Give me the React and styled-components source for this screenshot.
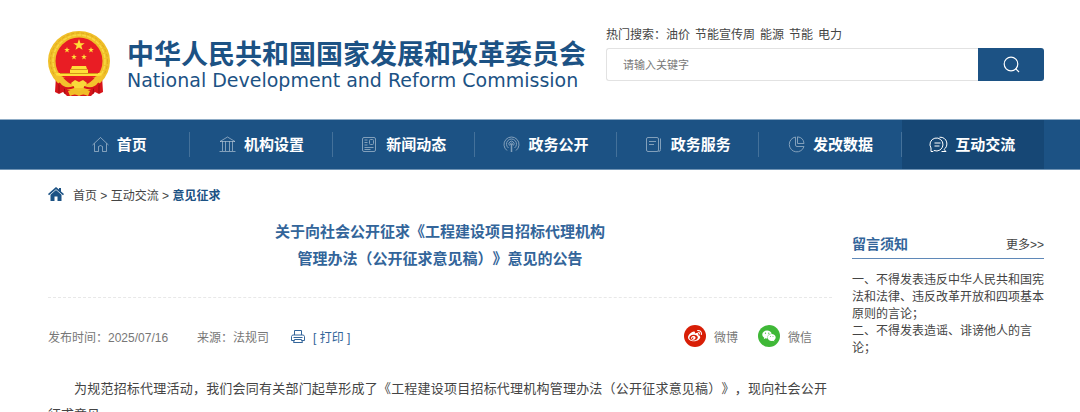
import React from 'react'
import styled, { createGlobalStyle } from 'styled-components'
import { FaWeibo, FaWeixin } from 'react-icons/fa'

const GlobalStyle = createGlobalStyle`
  * {
    box-sizing: border-box;
  }

  body {
    margin: 0;
    background: #fff;
    color: #444;
    font-family: 'Liberation Sans', 'Noto Sans CJK SC', sans-serif;
    font-size: 12px;
    text-spacing-trim: space-all;
    overflow-x: hidden;
  }

  a {
    color: inherit;
    text-decoration: none;
  }

  h1, h2, p {
    margin: 0;
  }
`

const Container = styled.div`
  padding: 0 36px 0 48px;
`

const Header = styled(Container)`
  display: flex;
  justify-content: space-between;
  align-items: flex-start;
  height: 119px;
`

const Brand = styled.a`
  display: flex;
  gap: 17px;
  padding-top: 30px;
  color: #1c5284;
`

const BrandText = styled.div`
  padding-top: 11px;
  white-space: nowrap;
`

const BrandName = styled.div`
  font-size: 27px;
  font-weight: 700;
  line-height: 28px;
`

const BrandEnglish = styled.div`
  font-family: 'DejaVu Sans', sans-serif;
  font-size: 19px;
  line-height: 22px;
`

const SearchArea = styled.div`
  width: 438px;
  padding-top: 26px;
`

const HotSearch = styled.div`
  display: flex;
  line-height: 18px;
  margin-bottom: 4px;
  white-space: nowrap;
`

const HotWords = styled.div`
  display: flex;
  gap: 5px;
`

const SearchForm = styled.form`
  display: flex;
  height: 33px;
`

const SearchInput = styled.input`
  flex: 1;
  min-width: 0;
  padding: 0 16px;
  border: 1px solid #e2e2e2;
  border-right: 0;
  border-radius: 3px 0 0 3px;
  font-family: inherit;
  font-size: 11px;
  color: #444;
  outline: none;

  &::placeholder {
    color: #777;
  }
`

const SearchButton = styled.button`
  display: flex;
  align-items: center;
  justify-content: center;
  width: 66px;
  padding: 0;
  border: 0;
  border-radius: 0 3px 3px 0;
  background: #1c5284;
  color: #fff;
  cursor: pointer;
`

const Nav = styled.nav`
  background: #1c5284;
  border-top: 1px solid #8facc6;
  border-bottom: 1px solid #6f93b4;
`

const NavList = styled(Container)`
  display: flex;
`

const NavItem = styled.a`
  flex: 1;
  display: flex;
  align-items: center;
  justify-content: center;
  gap: 8px;
  position: relative;
  height: 49px;
  color: #fff;
  font-size: 15px;
  font-weight: 700;
  line-height: 20px;
  background: ${({ $active }) => ($active ? '#164775' : 'transparent')};

  svg {
    opacity: ${({ $active }) => ($active ? 1 : 0.45)};
  }

  &:not(:last-child)::after {
    content: '';
    position: absolute;
    right: 0;
    top: 12px;
    height: 25px;
    border-right: 1px solid #44719a;
  }
`

const Breadcrumb = styled(Container)`
  display: flex;
  align-items: center;
  height: 48px;
`

const Crumbs = styled.div`
  margin-left: 9px;
`

const CurrentCrumb = styled.a`
  && {
    color: #1c5284;
  }
  font-weight: 700;
`

const Content = styled(Container)`
  display: grid;
  grid-template-columns: minmax(0, 1fr) 192px;
  column-gap: 20px;
`

const Title = styled.h1`
  padding-bottom: 25px;
  border-bottom: 1px dashed #e8e8e8;
  color: #33659a;
  font-size: 15px;
  line-height: 27px;
  text-align: center;
`

const Meta = styled.div`
  display: flex;
  align-items: center;
  height: 76px;
  margin-bottom: 2px;
  color: #777;
`

const Source = styled.span`
  margin-left: 29px;
`

const PrintButton = styled.button`
  display: flex;
  align-items: center;
  gap: 8px;
  margin-left: 22px;
  padding: 0;
  border: 0;
  background: none;
  color: #33659a;
  font: inherit;
  cursor: pointer;
`

const Share = styled.div`
  display: flex;
  gap: 20px;
  margin-left: auto;
  padding-right: 20px;
`

const ShareLink = styled.a`
  display: flex;
  align-items: center;
  gap: 8px;
`

const ShareIcon = styled.span`
  display: flex;
  align-items: center;
  justify-content: center;
  width: 22px;
  height: 22px;
  border-radius: 50%;
  background: ${({ $color }) => $color};
  color: #fff;
  font-size: 14px;
`

const Article = styled.p`
  color: #444;
  font-size: 13px;
  line-height: 26px;
  text-indent: 2em;
  text-align: justify;
  padding-right: 5px;
`

const Sidebar = styled.aside`
  padding-top: 15px;
`

const SidebarHead = styled.div`
  display: flex;
  justify-content: space-between;
  align-items: center;
  height: 26px;
  padding-bottom: 5px;
  border-bottom: 1px solid #5f88b8;
`

const SidebarTitle = styled.h2`
  color: #33659a;
  font-size: 14px;
  font-weight: 700;
`

const Rules = styled.div`
  padding-top: 13px;
  line-height: 17px;
`

const STAR = 'M0-1 .24-.31.95-.31.38.12.59.81 0 .4-.59.81-.38.12-.95-.31-.24-.31Z'

const Emblem = () => (
  <svg width="62" height="67" viewBox="0 0 62 67" aria-hidden="true">
    <path d="M8 46 7 62l4 2 4-2 4 4h24l4-4 4 2 4-2-1-16Z" fill="#d7141a" />
    <path d="M11 52v11M16 54l1 10M51 52v11M46 54l-1 10" stroke="#9f0d12" />
    <ellipse cx="31" cy="31" rx="31" ry="30" fill="#f0bf28" />
    <ellipse cx="31" cy="31" rx="28.500" ry="28" fill="none" stroke="#dfa91f" strokeDasharray="3 2" />
    <ellipse cx="31" cy="31" rx="26" ry="26" fill="none" stroke="#f8d943" strokeWidth="1.500" strokeDasharray="4 1" />
    <circle cx="31" cy="31" r="23.500" fill="#e91d24" />
    <g fill="#ffdf38">
      <path d={STAR} transform="translate(31 15) scale(6)" />
      <path d={STAR} transform="translate(19 20) scale(3)" />
      <path d={STAR} transform="translate(43 20) scale(3)" />
      <path d={STAR} transform="translate(26 27) scale(3)" />
      <path d={STAR} transform="translate(36 27) scale(3)" />
      <path d="M24 36h14l1 3H23ZM22 39h18v4h13l1 3H8l1-3h13Z" />
    </g>
    <path d="M22 39.500h18M12 43.500h38" stroke="#d59519" />
    <path d="M6 45c9 1 13 3 17 7 3 2 13 2 16 0 4-4 8-6 17-7-3 8-10 14-16 15-3 3-15 3-18 0C16 59 9 53 6 45Z" fill="#f3c22c" />
    <path d="M15 47.500c4 5 9 8 16 8s12-3 16-8l-7 1-4-1-5 3-5-3-4 1Z" fill="#e01b20" />
    <path d="m23 53 4-3 4 2 4-2 4 3-3 5h-10Z" fill="#f9d93a" />
    <path d="M11 53c4 6 10 6 15 4M51 53c-4 6-10 6-15 4" stroke="#d7141a" strokeWidth="2" fill="none" />
    <path d="M20 61q5-3 11 0 6-3 11 0l-2 5q-5-3-9 0-4-3-9 0Z" fill="#f0bd27" />
  </svg>
)

const SearchIcon = () => (
  <svg width="17" height="17" viewBox="0 0 17 17" fill="none" stroke="currentColor" strokeWidth="1.200" aria-hidden="true">
    <circle cx="8" cy="8" r="6.800" />
    <path d="m12.500 12.500 3.500 3.500" />
  </svg>
)

const CrumbHome = () => (
  <svg width="16" height="14" viewBox="0 0 16 14" fill="#1c5284" aria-hidden="true">
    <path d="M8 0 0 7l1 1.200 7-6 7 6L16 7l-3-2.600V1h-2v1.600Z" />
    <path d="M8 3 2.500 7.700V14h4V9.500h3V14h4V7.700Z" />
  </svg>
)

const PrintIcon = () => (
  <svg width="14" height="13" viewBox="0 0 14 13" fill="none" stroke="currentColor" aria-hidden="true">
    <path d="M3.500 5V.5h7V5M3.500 10.500H.5v-4l1-1.500h11l1 1.500v4h-3M2.500 7.500h9" />
    <path d="M3.500 9.500h7l1 3h-9Z" />
  </svg>
)

const navIcons = {
  home: <path d="M.5 9 8.500 1.500 16.500 9M2.500 7.500v8h4v-5q2-2 4 0v5h4v-8" />,
  bank: <path d="M1 5.500 8.500 1 16 5.500ZM3.500 5.500v9.500M6.500 5.500v9.500M10.500 5.500v9.500M13.500 5.500v9.500M.5 15.500h16" />,
  news: (
    <>
      <rect x="1.500" y="1.500" width="13" height="14" rx="1.500" />
      <path d="M3.500 4h3M3.500 6.500h3M3.500 9h3M3.500 11.500h9M3.500 13.500h6" />
      <rect x="8.500" y="3.500" width="4" height="5" rx="1" />
    </>
  ),
  signal: (
    <>
      <path d="M4 14.500a7.500 7.500 0 1 1 9 0M5.500 12a5 5 0 1 1 6 0M6.500 9.500a2.600 2.600 0 1 1 4 0" />
      <path d="M8.500 8v8" strokeWidth="1.500" />
      <circle cx="8.500" cy="8" r="1" />
    </>
  ),
  papers: (
    <>
      <rect x=".5" y="1.500" width="12" height="14" rx="1.500" />
      <path d="M3 5.500h7M3 8.500h5M14.500 2.500v11q0 2-2 2" />
    </>
  ),
  pie: (
    <>
      <path d="M7.500 1a7.500 7.500 0 1 0 8.500 9.500h-7q-1.500 0-1.500-1.500Z" />
      <path d="M9.500.8v6.700h6.500q-.5-6-6.500-6.700Z" />
    </>
  ),
  chat: (
    <>
      <path d="M1 15.500v-3.500A6.500 6.500 0 1 1 4 14.500l-1 1Z" />
      <path d="M4.500 7h6M4.500 10h5M9.500 1.200c8-.5 9.500 9 4.500 12.300l2 2h-4.500" />
    </>
  ),
}

const NavIcon = ({ name }) => (
  <svg width="17" height="17" viewBox="0 0 17 17" fill="none" stroke="currentColor" overflow="visible" aria-hidden="true">
    {navIcons[name]}
  </svg>
)

const navItems = [
  { label: '首页', icon: 'home' },
  { label: '机构设置', icon: 'bank' },
  { label: '新闻动态', icon: 'news' },
  { label: '政务公开', icon: 'signal' },
  { label: '政务服务', icon: 'papers' },
  { label: '发改数据', icon: 'pie' },
  { label: '互动交流', icon: 'chat', active: true },
]

const hotWords = ['油价', '节能宣传周', '能源', '节能', '电力']

const App = () => {
  const [keyword, setKeyword] = React.useState('')

  return (
    <>
      <GlobalStyle />
      <Header as="header">
        <Brand href="#">
          <Emblem />
          <BrandText>
            <BrandName>中华人民共和国国家发展和改革委员会</BrandName>
            <BrandEnglish>National Development and Reform Commission</BrandEnglish>
          </BrandText>
        </Brand>
        <SearchArea>
          <HotSearch>
            <span>热门搜索：</span>
            <HotWords>
              {hotWords.map(word => (
                <a href="#" key={word}>{word}</a>
              ))}
            </HotWords>
          </HotSearch>
          <SearchForm onSubmit={e => e.preventDefault()}>
            <SearchInput
              aria-label="请输入关键字"
              placeholder="请输入关键字"
              value={keyword}
              onChange={e => setKeyword(e.target.value)}
            />
            <SearchButton aria-label="搜索">
              <SearchIcon />
            </SearchButton>
          </SearchForm>
        </SearchArea>
      </Header>

      <Nav>
        <NavList>
          {navItems.map(item => (
            <NavItem href="#" key={item.label} $active={item.active}>
              <NavIcon name={item.icon} />
              {item.label}
            </NavItem>
          ))}
        </NavList>
      </Nav>

      <Breadcrumb>
        <CrumbHome />
        <Crumbs>
          <a href="#">首页</a> &gt; <a href="#">互动交流</a> &gt;{' '}
          <CurrentCrumb href="#">意见征求</CurrentCrumb>
        </Crumbs>
      </Breadcrumb>

      <Content>
        <main>
          <Title>
            关于向社会公开征求《工程建设项目招标代理机构
            <br />
            管理办法（公开征求意见稿）》意见的公告
          </Title>
          <Meta>
            <span>发布时间：2025/07/16</span>
            <Source>来源：法规司</Source>
            <PrintButton>
              <PrintIcon />
              [ 打印 ]
            </PrintButton>
            <Share>
              <ShareLink href="#">
                <ShareIcon $color="#d81e06"><FaWeibo /></ShareIcon>
                微博
              </ShareLink>
              <ShareLink href="#">
                <ShareIcon $color="#3fb837"><FaWeixin /></ShareIcon>
                微信
              </ShareLink>
            </Share>
          </Meta>
          <Article>
            为规范招标代理活动，我们会同有关部门起草形成了《工程建设项目招标代理机构管理办法（公开征求意见稿）》，现向社会公开征求意见。
          </Article>
        </main>

        <Sidebar>
          <SidebarHead>
            <SidebarTitle>留言须知</SidebarTitle>
            <a href="#">更多&gt;&gt;</a>
          </SidebarHead>
          <Rules>
            <p>一、不得发表违反中华人民共和国宪法和法律、违反改革开放和四项基本原则的言论；</p>
            <p>二、不得发表造谣、诽谤他人的言论；</p>
          </Rules>
        </Sidebar>
      </Content>
    </>
  )
}

export default App
